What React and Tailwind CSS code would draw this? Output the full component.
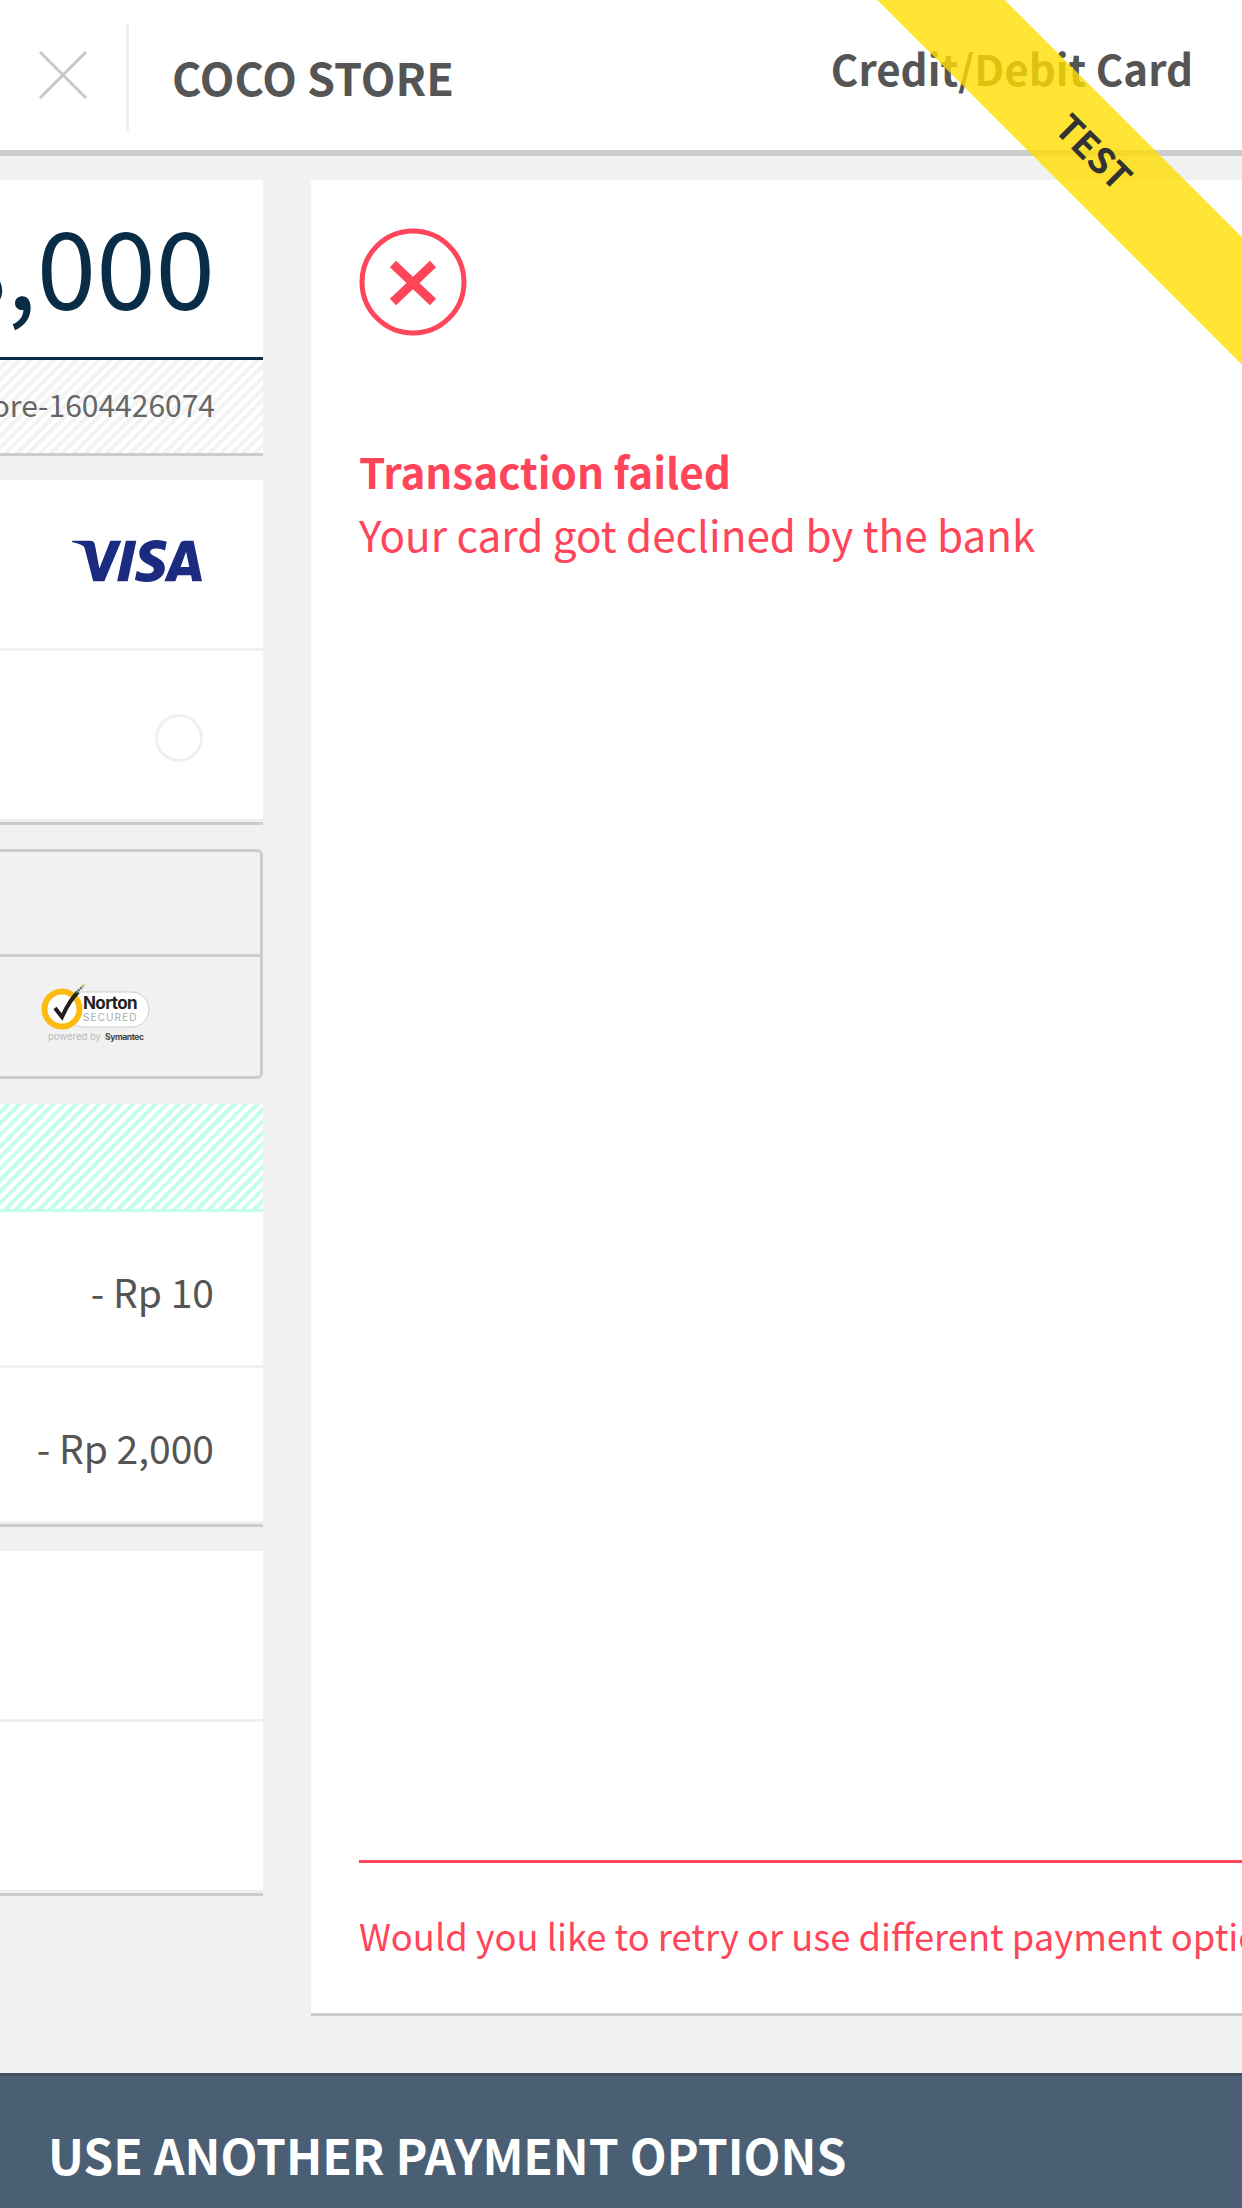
import { SiVisa } from 'react-icons/si'

const FONT = "font-['Noto_Sans_CJK_JP','Noto_Sans',sans-serif]"

function NortonBadge() {
  return (
    <svg width="112" height="62" viewBox="0 0 112 62" className="overflow-visible">
      <rect x="26" y="8" width="83" height="35" rx="17.5" fill="#fff" stroke="#cfcfcf" strokeWidth="1" />
      <circle cx="22" cy="25" r="17.5" fill="#fff" stroke="#fdbb11" strokeWidth="6" />
      <path d="M15 24l7 9c4-9 10-19 16-25" fill="none" stroke="#231f20" strokeWidth="4" />
      <path d="M36 9l7-7" fill="none" stroke="#666" strokeWidth="2.5" strokeDasharray="2 1" />
      <circle cx="44" cy="1" r="1" fill="#fdbb11" />
      <text x="43" y="25" fontSize="17" fontWeight="700" letterSpacing="-0.6" fill="#231f20" fontFamily="Inter, sans-serif">Norton</text>
      <text x="43" y="37" fontSize="10" letterSpacing="1.1" fill="#aaa" fontFamily="Inter, sans-serif">SECURED</text>
      <text x="8" y="56" fontSize="9.5" fill="#bbb" fontFamily="Inter, sans-serif">powered by</text>
      <text x="65" y="56" fontSize="8.5" fontWeight="700" letterSpacing="-0.4" fill="#444" fontFamily="Inter, sans-serif">Symantec</text>
    </svg>
  )
}

export default function App() {
  return (
    <div className={`${FONT} relative w-[1242px] h-[2208px] overflow-hidden bg-[#f1f1f1] flex flex-col`}>
      {/* top bar */}
      <header className="h-[156px] shrink-0 bg-white border-b-[6px] border-[#cccccc] flex items-center">
        <div className="w-[129px] h-[108px] mt-[6px] border-r-[3px] border-[#f0f0f0] flex items-center justify-center">
          <svg width="50" height="50" viewBox="0 0 50 50" className="-mt-[6px]">
            <path d="M2 2l46 46M48 2L2 48" stroke="#c8c8c8" strokeWidth="3" fill="none" />
          </svg>
        </div>
        <div className="ml-[43px] pt-[2px] text-[45px] font-bold text-[#555555] leading-none">COCO STORE</div>
        <div className="ml-auto mr-[49px] mb-[14px] text-[42px] font-bold text-[#555555] leading-none">Credit/Debit Card</div>
      </header>

      <main className="flex-1 flex gap-[48px] pt-[24px] min-h-0">
        {/* left column, scrolled off the left edge */}
        <div className="w-[263px] shrink-0 flex flex-col">
          <div className="bg-white border-b-[3px] border-[#cccccc]">
            <div className="h-[180px] pb-[11px] border-b-[3px] border-[#0a2d47] flex items-center justify-end pr-[48px] overflow-hidden">
              <span className="text-[107px] text-[#0a2d47] leading-none whitespace-nowrap">8,000</span>
            </div>
            <div className="h-[93px] pb-[4px] flex items-center justify-end pr-[48px] text-[30px] text-[#666666] whitespace-nowrap overflow-hidden bg-[repeating-linear-gradient(135deg,#ffffff_0px,#ffffff_4px,#f3f3f3_4px,#f3f3f3_8px)]">
              ore-1604426074
            </div>
          </div>

          <div className="mt-[24px] bg-white border-b-[3px] border-[#cccccc]">
            <div className="h-[171px] pb-[6px] border-b-[3px] border-[#f0f0f0] flex items-center justify-end pr-[61px]">
              <SiVisa className="w-[130px] h-[130px] -my-[20px] text-[#1a2b80]" />
            </div>
            <div className="h-[171px] pt-[6px] border-b-[3px] border-[#f0f0f0] flex items-center justify-end pr-[60px]">
              <div className="w-[48px] h-[48px] rounded-full border-[3px] border-[#f0f0f0]" />
            </div>
          </div>

          <div className="mt-[24px] h-[230px] border-[3px] border-l-0 border-[#cccccc] rounded-r-[6px] flex flex-col">
            <div className="h-[105px] border-b-[3px] border-[#cccccc]" />
            <div className="flex-1 flex items-center pl-[40px] pb-[4px]">
              <NortonBadge />
            </div>
          </div>

          <div className="mt-[25px] bg-white border-b-[3px] border-[#cccccc]">
            <div className="h-[108px] border-b-[3px] border-[#c6ffe9] bg-[repeating-linear-gradient(135deg,#ffffff_0px,#ffffff_4px,#c6ffe9_4px,#c6ffe9_8px)]" />
            <div className="h-[156px] pt-[6px] border-b-[3px] border-[#f0f0f0] flex items-center justify-end pr-[49px] text-[39px] text-[#555555]">- Rp 10</div>
            <div className="h-[156px] pt-[6px] border-b-[3px] border-[#f0f0f0] flex items-center justify-end pr-[49px] text-[39px] text-[#555555]">- Rp 2,000</div>
          </div>

          <div className="mt-[24px] bg-white border-b-[3px] border-[#cccccc]">
            <div className="h-[171px] border-b-[3px] border-[#f0f0f0]" />
            <div className="h-[171px] border-b-[3px] border-[#f0f0f0]" />
          </div>
        </div>

        {/* status panel runs past the right edge */}
        <section className="w-[1000px] shrink-0 h-[1836px] bg-white border-b-[3px] border-[#cccccc] pl-[48px] flex flex-col">
          <svg width="108" height="108" viewBox="0 0 108 108" className="mt-[48px] shrink-0">
            <circle cx="54" cy="54" r="51" fill="none" stroke="#ff4559" strokeWidth="5" />
            <path d="M34 36l40 38M74 36L34 74" stroke="#ff4559" strokeWidth="9" fill="none" />
          </svg>
          <div className="mt-[103px] text-[42.2px] font-bold text-[#ff4559] leading-[63px]">Transaction failed</div>
          <div className="text-[42.2px] text-[#ff4559] leading-[63px] whitespace-nowrap">Your card got declined by the bank</div>
          <div className="mt-auto border-t-[3px] border-[#ff4559] h-[153px] pb-[6px] flex items-center text-[36.3px] text-[#ff4559] whitespace-nowrap">
            Would you like to retry or use different payment options?
          </div>
        </section>
      </main>

      {/* bottom action bar */}
      <footer className="h-[135px] shrink-0 bg-[#4a5f73] border-t-[3px] border-[#44505c] flex items-center pl-[48px] pt-[24px] text-[48px] font-bold text-white whitespace-nowrap">
        USE ANOTHER PAYMENT OPTIONS
      </footer>

      {/* test ribbon */}
      <div className="absolute top-[106px] right-[-160px] w-[620px] h-[90px] pb-[6px] pl-[4px] rotate-45 bg-[#ffdd00]/80 flex items-center justify-center text-[36px] font-bold text-[#333333]">
        TEST
      </div>
    </div>
  )
}
